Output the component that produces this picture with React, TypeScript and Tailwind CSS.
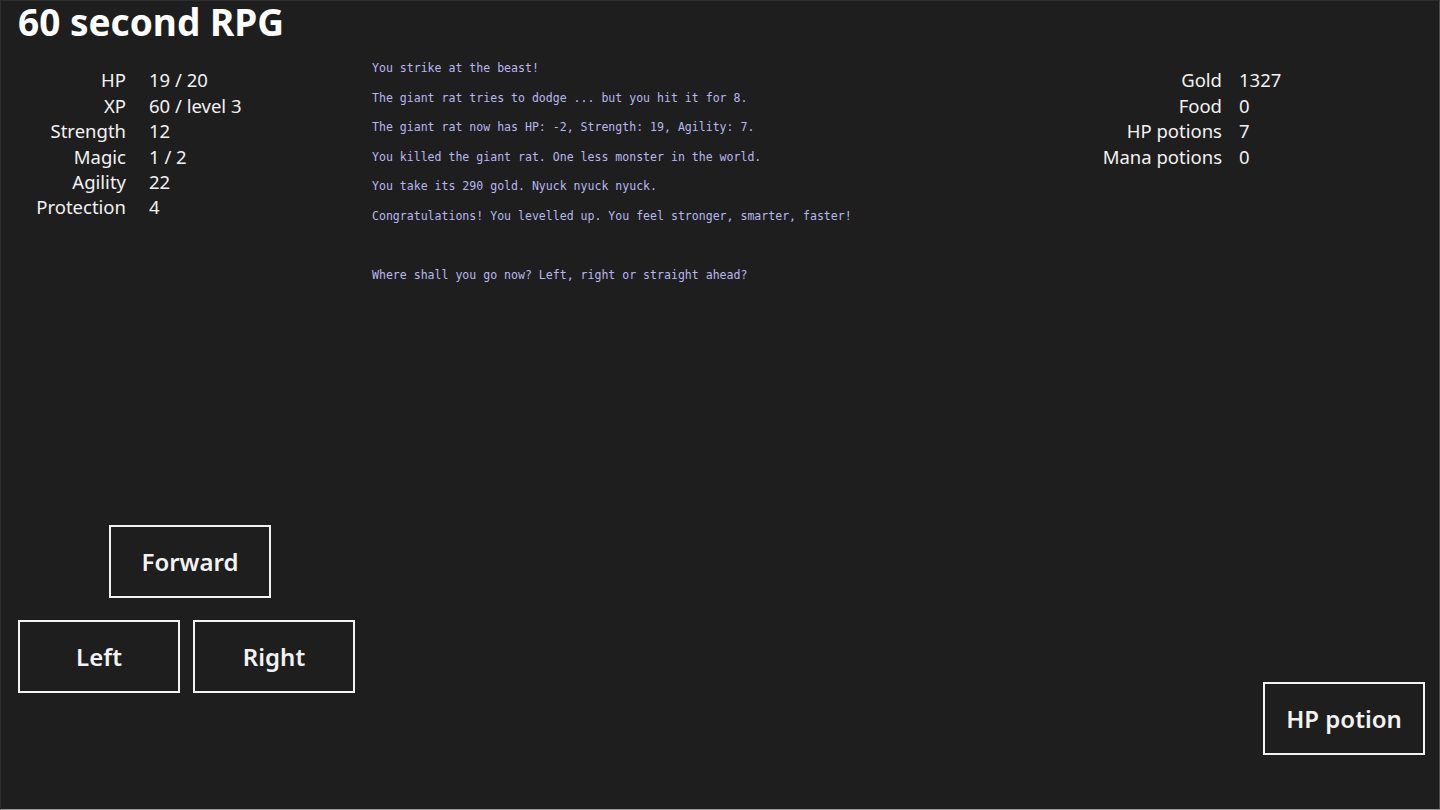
import React from "react";

const ui = { fontFamily: '"Noto Sans", "Open Sans", sans-serif' };
const mono = { fontFamily: '"DejaVu Sans Mono", "Liberation Mono", monospace' };

const heroStats: [string, string][] = [
  ["HP", "19 / 20"],
  ["XP", "60 / level 3"],
  ["Strength", "12"],
  ["Magic", "1 / 2"],
  ["Agility", "22"],
  ["Protection", "4"],
];

const inventory: [string, string][] = [
  ["Gold", "1327"],
  ["Food", "0"],
  ["HP potions", "7"],
  ["Mana potions", "0"],
];

const log: string[] = [
  "You strike at the beast!",
  "The giant rat tries to dodge ... but you hit it for 8.",
  "The giant rat now has HP: -2, Strength: 19, Agility: 7.",
  "You killed the giant rat. One less monster in the world.",
  "You take its 290 gold. Nyuck nyuck nyuck.",
  "Congratulations! You levelled up. You feel stronger, smarter, faster!",
  "",
  "Where shall you go now? Left, right or straight ahead?",
];

function StatTable({ rows, labelWidth, gap }: { rows: [string, string][]; labelWidth: string; gap: string }) {
  return (
    <div className="flex flex-col">
      {rows.map(([k, v]) => (
        <div key={k} className={`flex h-[25.4px] items-center whitespace-nowrap text-[18.5px] leading-none text-[#f2f2f2] ${gap}`}>
          <span className={`${labelWidth} shrink-0 text-right`}>{k}</span>
          <span>{v}</span>
        </div>
      ))}
    </div>
  );
}

function ActionButton({ label }: { label: string }) {
  return (
    <button className="flex h-[73px] w-[162px] items-center justify-center border-2 border-[#f2f2f2] bg-transparent text-[24px] font-semibold text-[#f2f2f2]">
      {label}
    </button>
  );
}

export default function App() {
  return (
    <div
      className="flex h-[810px] w-[1440px] overflow-hidden border-t border-r border-b border-l border-t-[#2e2e2e] border-r-[#4c4c4c] border-b-[#9a9a9a] border-l-[#2e2e2e] bg-[#1e1e1e]"
      style={ui}
    >
      {/* left column: title, hero stats, movement buttons */}
      <div className="flex w-[371px] shrink-0 flex-col pl-[17px]">
        <h1 className="whitespace-nowrap text-[37px] font-bold leading-[42px] text-white">60 second RPG</h1>
        <div className="mt-[25px]">
          <StatTable rows={heroStats} labelWidth="w-[108px]" gap="gap-[23px]" />
        </div>
        <div className="flex-1" />
        <div className="mb-[116px] flex flex-col gap-[22px]">
          <div className="ml-[91px]">
            <ActionButton label="Forward" />
          </div>
          <div className="flex gap-[13px]">
            <ActionButton label="Left" />
            <ActionButton label="Right" />
          </div>
        </div>
      </div>

      {/* middle column: message log */}
      <div className="flex-1 pt-[53px] text-[11.55px] text-[#b8b8ee]" style={mono}>
        {log.map((line, i) => (
          <p key={i} className="h-[29.6px] leading-[29.6px] whitespace-pre">
            {line}
          </p>
        ))}
      </div>

      {/* right column: inventory and potion button */}
      <div className="flex w-[339px] shrink-0 flex-col">
        <div className="mt-[67px]">
          <StatTable rows={inventory} labelWidth="w-[122px]" gap="gap-[17px]" />
        </div>
        <div className="flex-1" />
        <div className="mr-[14px] mb-[54px] self-end">
          <ActionButton label="HP potion" />
        </div>
      </div>
    </div>
  );
}
